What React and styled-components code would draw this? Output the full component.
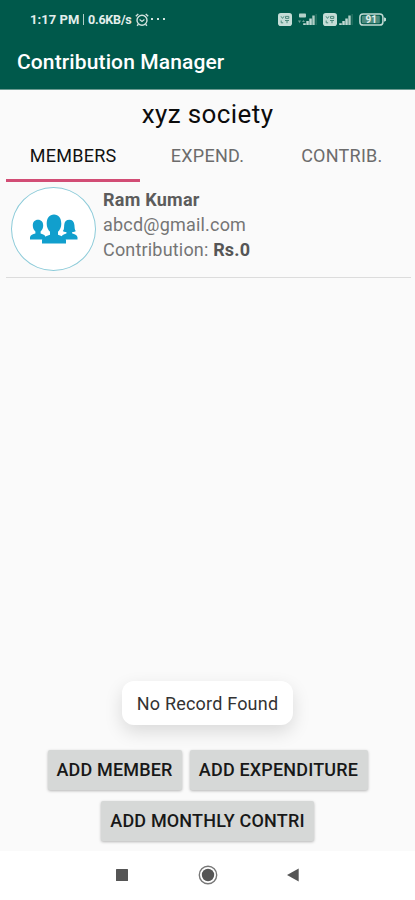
import { useState } from "react";
import styled, { createGlobalStyle } from "styled-components";

const members = [
  { name: "Ram Kumar", email: "abcd@gmail.com", contribution: "Rs.0" }
];

const tabs = ["MEMBERS", "EXPEND.", "CONTRIB."];

const AlarmIcon = () => (
  <svg width="14" height="14" viewBox="0 0 14 14" fill="none" stroke="#d3e3df">
    <circle cx="7" cy="7.3" r="5" strokeWidth="1.4" />
    <path d="M4.6 6.5 7 8.5l2.4-2" strokeWidth="1.1" />
    <path
      d="M.8 3.3 3.3 1M13.2 3.3 10.7 1M3.4 11.3l-1.3 1.5M10.6 11.3l1.3 1.5"
      strokeWidth="1.4"
    />
  </svg>
);

const VolteIcon = () => (
  <svg width="14" height="13" viewBox="0 0 14 13">
    <rect width="14" height="13" rx="2.8" fill="#c5ddd7" />
    <path
      d="M3 3.3 4.5 5.4 6 3.3M7.5 3.4h3.3v2H7.5zM3.2 7.5v2.3h2M7 7.5h4M9 7.5v2.7"
      fill="none"
      stroke="#4b887b"
      strokeWidth="1"
    />
  </svg>
);

const SignalIcon = ({ network }) => (
  <svg
    width={network ? 20 : 14}
    height="13"
    viewBox={network ? "0 0 20 13" : "6 0 14 13"}
  >
    {network && (
      <>
        <rect x="2" y="0.5" width="7" height="4" rx="0.8" fill="#b5d1ca" />
        <path d="M1 7.5h3L2.5 10zM5 9l1.5-2L8 9z" fill="#6c9f94" />
      </>
    )}
    <path
      d="M6.2 10.3h2.6V12H6.2zM9.3 8h2.5v4H9.3zM12.3 5.5h2.5V12h-2.5z"
      fill="#bfd8d2"
    />
    <path d="M15.3 2.5h2.4V12h-2.4z" fill="#b0cec6" />
    <path d="M18.6 1h1v11h-1z" fill="#377b6c" />
  </svg>
);

const BatteryIcon = () => (
  <svg width="28" height="13" viewBox="0 0 28 13">
    <rect
      x="0.9"
      y="0.9"
      width="23"
      height="11.2"
      rx="3.2"
      fill="none"
      stroke="#c1dad4"
      strokeWidth="1.5"
    />
    <rect x="2.8" y="2.8" width="18" height="7.4" rx="1" fill="#4c8b7d" />
    <path d="M25 4.2l2 1v2.6l-2 1z" fill="#c1dad4" />
    <text
      x="12.3"
      y="10"
      textAnchor="middle"
      fontFamily="Roboto, sans-serif"
      fontSize="10"
      fontWeight="700"
      fill="#e2efec"
    >
      91
    </text>
  </svg>
);

const GroupIcon = () => (
  <svg width="48" height="30" viewBox="0 0 48 30" fill="#119fcd">
    <path d="M0 25.5v-2.2c.3-2.2 3-2.9 5.4-3.7v-2.1C3.8 16 2.8 14 2.8 11.5c0-3.5 2-5.7 5.2-5.7s5.2 2.2 5.2 5.7c0 2.5-1 4.5-2.6 6v2.1c2 .7 3.4 1.2 4.4 2.1v3.8z" />
    <path d="M47.5 25.5v-2.2c-.4-2.1-3-2.9-5.3-3.7v-1.5c1.5 0 2.9-.4 3.6-1-1.3-1.2-1.1-3.4-1.4-6.1-.3-3.4-2.2-5.2-5-5.2-3.1 0-5 1.8-5.2 5.2-.2 2.7 0 4.9-1.4 6.1.8.6 2 1 3.6 1v1.5c-2 .7-3.4 1.2-4.4 2.1v3.8z" />
    <path d="M12 29.5v-3.3c.5-3.5 4.4-3.9 8-5.5v-3c-2-1.8-3.3-4.6-3.3-8C16.7 4 19.4.5 24 .5s7.3 3.5 7.3 9.2c0 3.4-1.3 6.2-3.3 8v3c3.6 1.6 7.5 2 8 5.5v3.3z" />
  </svg>
);

const App = () => {
  const [activeTab, setActiveTab] = useState("MEMBERS");

  return (
    <Screen>
      <GlobalStyle />
      <Header>
        <StatusBar>
          <StatusGroup>
            <Clock>1:17 PM</Clock>
            <Pipe />
            <Speed>0.6KB/s</Speed>
            <AlarmIcon />
            <Dots>
              <i />
              <i />
              <i />
            </Dots>
          </StatusGroup>
          <StatusGroup>
            <VolteIcon />
            <NetworkSignal>
              <SignalIcon network />
            </NetworkSignal>
            <VolteIcon />
            <Signal>
              <SignalIcon />
            </Signal>
            <BatteryIcon />
          </StatusGroup>
        </StatusBar>
        <AppTitle>Contribution Manager</AppTitle>
      </Header>

      <Society>xyz society</Society>

      <TabBar>
        {tabs.map(tab => (
          <Tab
            key={tab}
            type="button"
            $active={tab === activeTab}
            onClick={() => setActiveTab(tab)}
          >
            {tab}
          </Tab>
        ))}
      </TabBar>

      <MemberList>
        {members.map(member => (
          <MemberRow key={member.email}>
            <Avatar>
              <GroupIcon />
            </Avatar>
            <MemberInfo>
              <Name>{member.name}</Name>
              <Email>{member.email}</Email>
              <Contribution>
                Contribution: <strong>{member.contribution}</strong>
              </Contribution>
            </MemberInfo>
          </MemberRow>
        ))}
      </MemberList>

      <Toast>No Record Found</Toast>

      <Actions>
        <ActionButton type="button" $width={134}>
          ADD MEMBER
        </ActionButton>
        <ActionButton type="button" $width={178}>
          ADD EXPENDITURE
        </ActionButton>
        <ActionButton type="button" $width={213}>
          ADD MONTHLY CONTRI
        </ActionButton>
      </Actions>

      <NavBar>
        <NavButton type="button" aria-label="Recent apps">
          <svg width="20" height="20" viewBox="0 0 20 20">
            <rect x="4" y="4" width="12" height="12" rx="0.5" fill="#555" />
          </svg>
        </NavButton>
        <NavButton type="button" aria-label="Home">
          <svg width="20" height="20" viewBox="0 0 20 20">
            <circle
              cx="10"
              cy="10"
              r="8.7"
              fill="none"
              stroke="#777"
              strokeWidth="1.4"
            />
            <circle cx="10" cy="10" r="6.2" fill="#555" />
          </svg>
        </NavButton>
        <NavButton type="button" aria-label="Back">
          <svg width="20" height="20" viewBox="0 0 20 20">
            <path d="M3 10 14.7 3.5v13z" fill="#555" />
          </svg>
        </NavButton>
      </NavBar>
    </Screen>
  );
};

const GlobalStyle = createGlobalStyle`
  * {
    box-sizing: border-box;
  }

  body {
    margin: 0;
    background: #fafafa;
    font-family: Roboto, sans-serif;
  }

  button {
    border: none;
    padding: 0;
    background: none;
    font: inherit;
  }

  svg {
    display: block;
    flex-shrink: 0;
  }
`;

const Screen = styled.div`
  width: 415px;
  height: 900px;
  display: flex;
  flex-direction: column;
  overflow: hidden;
  background: #fafafa;
`;

const Header = styled.header`
  height: 90px;
  flex-shrink: 0;
  background: #00594b;
  border-bottom: 1px solid #6b9b91;
`;

const StatusBar = styled.div`
  height: 39px;
  display: flex;
  align-items: center;
  justify-content: space-between;
  padding: 0 28px 0 30px;
  color: #e3eeeb;
  font-size: 12px;
  font-weight: 700;
`;

const StatusGroup = styled.div`
  display: flex;
  align-items: center;
`;

const Clock = styled.span`
  width: 50px;
  font-size: 13px;
  letter-spacing: 0.05px;
  white-space: nowrap;
`;

const Pipe = styled.span`
  width: 1px;
  height: 11px;
  margin: 0 4px 0 3px;
  background: #b3cec8;
`;

const Speed = styled.span`
  width: 47px;
  font-size: 12.5px;
  letter-spacing: -0.2px;
  white-space: nowrap;
`;

const Dots = styled.span`
  display: flex;
  gap: 4px;
  margin: 0 0 1px 2px;

  i {
    width: 2px;
    height: 2px;
    background: #d3e3df;
  }
`;

const NetworkSignal = styled.span`
  margin: 0 6px 0 5px;
`;

const Signal = styled.span`
  margin: 0 6px 0 2px;
`;

const AppTitle = styled.h1`
  margin: 0;
  padding-left: 17px;
  color: #fff;
  font-size: 21px;
  font-weight: 500;
  line-height: 46px;
  letter-spacing: 0.12px;
`;

const Society = styled.h2`
  height: 42px;
  margin: 0;
  color: #0c0c0c;
  font-size: 26px;
  font-weight: 400;
  line-height: 49px;
  letter-spacing: 0.4px;
  text-align: center;
`;

const TabBar = styled.nav`
  height: 50px;
  flex-shrink: 0;
  display: grid;
  grid-template-columns: repeat(3, 1fr);
  padding: 0 6px;
`;

const Tab = styled.button`
  border-bottom: 3px solid
    ${({ $active }) => ($active ? "#d24d75" : "transparent")};
  color: ${({ $active }) => ($active ? "#111" : "#6c6c6c")};
  font-size: 18px;
  letter-spacing: 0.25px;
`;

const MemberList = styled.main`
  flex: 1;
  padding: 0 4px 0 6px;
`;

const MemberRow = styled.article`
  height: 96px;
  display: flex;
  padding: 5px 0 0 5px;
  border-bottom: 1px solid #dcdcdc;
`;

const Avatar = styled.div`
  width: 85px;
  height: 84px;
  display: grid;
  place-items: center;
  border: 1px solid #8ccbd9;
  border-radius: 50%;
  background: #fff;
`;

const MemberInfo = styled.div`
  margin-left: 7px;
  color: #757575;
  font-size: 18px;
  line-height: 25px;

  strong {
    color: #565656;
    font-weight: 700;
  }
`;

const Name = styled.div`
  color: #5c5c5c;
  font-weight: 700;
  letter-spacing: 0.25px;
`;

const Email = styled.div`
  letter-spacing: 0.2px;
`;

const Contribution = styled.div`
  letter-spacing: 0.18px;
`;

const Toast = styled.div`
  width: 171px;
  height: 44px;
  flex-shrink: 0;
  align-self: center;
  margin-bottom: 24px;
  border-radius: 12px;
  background: #fff;
  box-shadow: 0 7px 18px rgba(0, 0, 0, 0.13);
  color: #333;
  font-size: 18px;
  line-height: 45px;
  letter-spacing: 0.2px;
  text-align: center;
`;

const Actions = styled.div`
  height: 102px;
  flex-shrink: 0;
  display: flex;
  flex-wrap: wrap;
  align-content: flex-start;
  justify-content: center;
  gap: 11px 8px;
  padding-top: 1px;
`;

const ActionButton = styled.button`
  width: ${({ $width }) => $width}px;
  height: 40px;
  padding-bottom: 2px;
  border-radius: 2px;
  background: #d6d8d7;
  box-shadow: 0 1px 3px rgba(0, 0, 0, 0.28);
  color: #181818;
  font-size: 18px;
  font-weight: 500;
  letter-spacing: 0.17px;
  white-space: nowrap;
`;

const NavBar = styled.footer`
  height: 49px;
  flex-shrink: 0;
  display: flex;
  justify-content: center;
  gap: 66px;
  padding-bottom: 1px;
  background: #fff;
`;

const NavButton = styled.button`
  width: 20px;
  display: grid;
  place-items: center;
`;

export default App;
